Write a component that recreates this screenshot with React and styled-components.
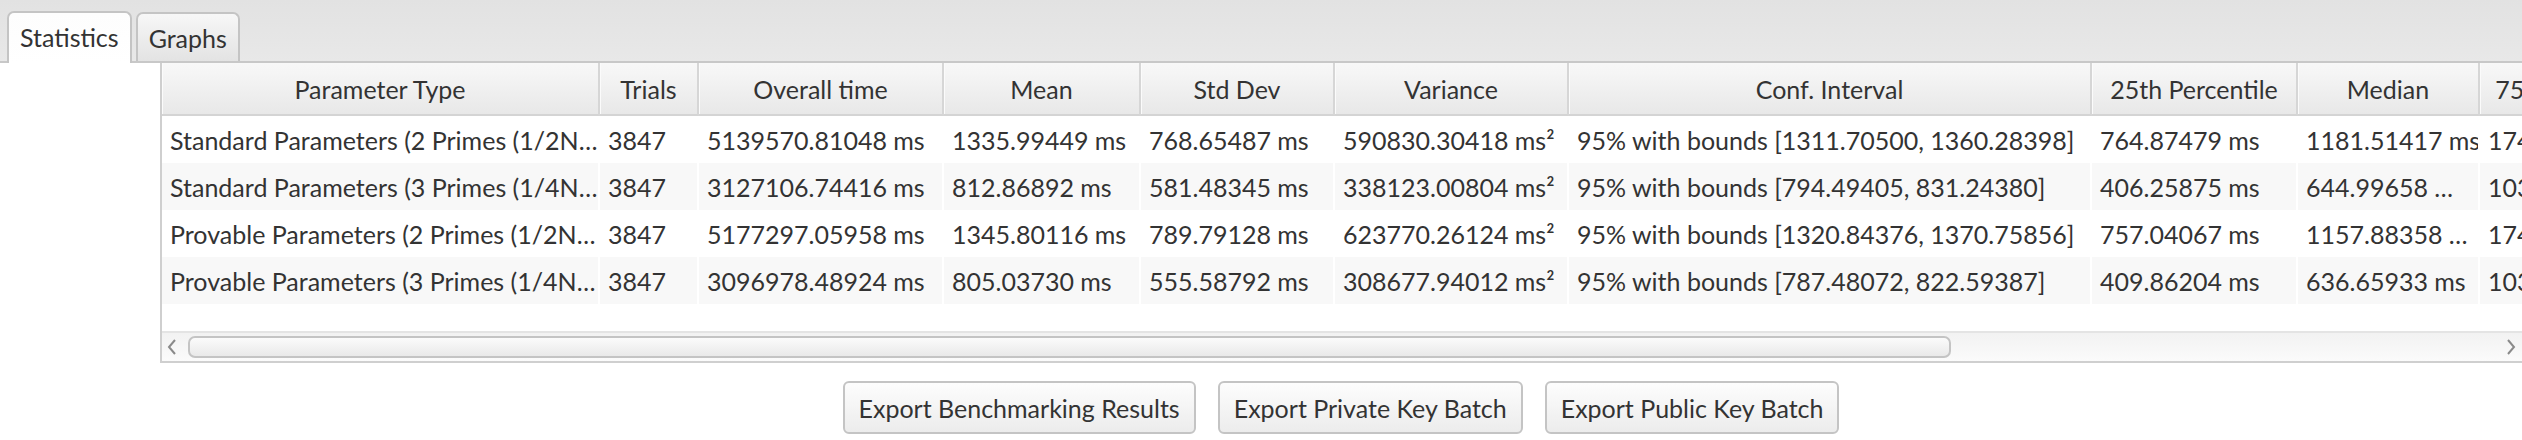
import React from "react";
import styled, { createGlobalStyle } from "styled-components";

const GlobalStyle = createGlobalStyle`
  html, body {
    margin: 0;
    padding: 0;
    background: #ffffff;
  }
  body {
    font-family: Lato, "Liberation Sans", sans-serif;
    color: #333333;
    overflow: hidden;
  }
`;

const Page = styled.div`
  width: 2522px;
  height: 440px;
  display: flex;
  flex-direction: column;
  background: #ffffff;
  overflow: hidden;
`;

const TabStrip = styled.div`
  height: 61px;
  flex: none;
  display: flex;
  align-items: flex-end;
  gap: 4px;
  padding-left: 7px;
  background: linear-gradient(#e2e2e2, #e8e8e8);
  border-bottom: 2px solid #c8c8c8;
`;

const Tab = styled.div`
  box-sizing: border-box;
  height: ${(p) => (p.$active ? "52px" : "49px")};
  margin-bottom: ${(p) => (p.$active ? "-2px" : "0")};
  padding: 0 11px ${(p) => (p.$active ? "3px" : "0")};
  display: flex;
  align-items: center;
  font-size: 25px;
  color: #333333;
  border: 2px solid #c4c4c4;
  border-bottom: none;
  border-radius: 7px 7px 0 0;
  background: ${(p) =>
    p.$active ? "linear-gradient(#fdfdfd, #ffffff)" : "linear-gradient(#f7f7f7, #e3e3e3)"};
`;

const Content = styled.div`
  flex: 1;
  display: flex;
  min-height: 0;
`;

const Gutter = styled.div`
  width: 160px;
  flex: none;
`;

const Main = styled.div`
  flex: 1;
  min-width: 0;
  display: flex;
  flex-direction: column;
`;

const TableFrame = styled.div`
  box-sizing: border-box;
  height: 300px;
  display: flex;
  flex-direction: column;
  overflow: hidden;
  border-left: 2px solid #cfcfcf;
  border-bottom: 2px solid #cfcfcf;
`;

const COLUMNS = "438px 99px 245px 197px 194px 234px 523px 206px 182px 200px";

const HeaderRow = styled.div`
  display: grid;
  grid-template-columns: ${COLUMNS};
  width: max-content;
  flex: none;
`;

const HeaderCell = styled.div`
  box-sizing: border-box;
  height: 53px;
  display: flex;
  align-items: center;
  justify-content: center;
  font-size: 25px;
  white-space: nowrap;
  overflow: hidden;
  background: linear-gradient(#f8f8f8, #e8e8e8);
  border-right: 2px solid #d6d6d6;
  border-bottom: 2px solid #d4d4d4;
  box-shadow: inset 1px 0 0 #fbfbfb;
`;

const DataRow = styled.div`
  display: grid;
  grid-template-columns: ${COLUMNS};
  width: max-content;
  height: 47px;
  flex: none;
  background: ${(p) => (p.$odd ? "#f8f8f8" : "#ffffff")};
`;

const Cell = styled.div`
  box-sizing: border-box;
  display: flex;
  align-items: center;
  padding-left: 8px;
  font-size: 25px;
  white-space: nowrap;
  overflow: hidden;
  border-right: 2px solid #ffffff;
`;

const Filler = styled.div`
  flex: 1;
`;

const ScrollBar = styled.div`
  box-sizing: border-box;
  height: 30px;
  flex: none;
  display: flex;
  align-items: center;
  padding: 0 5px 0 4px;
  border-top: 2px solid #e4e4e4;
  background: linear-gradient(#f2f2f2, #fbfbfb);
`;

const Thumb = styled.div`
  box-sizing: border-box;
  width: 1763px;
  height: 22px;
  margin-left: 10px;
  border: 2px solid #c4c4c4;
  border-radius: 7px;
  background: linear-gradient(#fbfbfb, #e9e9e9);
`;

const ArrowSlot = styled.div`
  width: 12px;
  height: 18px;
  display: flex;
  align-items: center;
  justify-content: center;
  margin-left: ${(p) => (p.$push ? "auto" : "0")};
`;

const ButtonBar = styled.div`
  display: flex;
  justify-content: center;
  gap: 22px;
  padding-top: 18px;
`;

const Button = styled.button`
  box-sizing: border-box;
  height: 53px;
  padding: 0 14px;
  font-family: Lato, "Liberation Sans", sans-serif;
  font-size: 25px;
  color: #333333;
  border: 2px solid #c4c4c4;
  border-radius: 6px;
  background: linear-gradient(#fdfdfd, #ececec);
`;

const headers = [
  "Parameter Type",
  "Trials",
  "Overall time",
  "Mean",
  "Std Dev",
  "Variance",
  "Conf. Interval",
  "25th Percentile",
  "Median",
  "75th Percentile",
];

const rows = [
  [
    "Standard Parameters (2 Primes (1/2N…",
    "3847",
    "5139570.81048 ms",
    "1335.99449 ms",
    "768.65487 ms",
    "590830.30418 ms²",
    "95% with bounds [1311.70500, 1360.28398]",
    "764.87479 ms",
    "1181.51417 ms",
    "1742.10325 ms",
  ],
  [
    "Standard Parameters (3 Primes (1/4N…",
    "3847",
    "3127106.74416 ms",
    "812.86892 ms",
    "581.48345 ms",
    "338123.00804 ms²",
    "95% with bounds [794.49405, 831.24380]",
    "406.25875 ms",
    "644.99658 …",
    "1033.41287 ms",
  ],
  [
    "Provable Parameters (2 Primes (1/2N…",
    "3847",
    "5177297.05958 ms",
    "1345.80116 ms",
    "789.79128 ms",
    "623770.26124 ms²",
    "95% with bounds [1320.84376, 1370.75856]",
    "757.04067 ms",
    "1157.88358 …",
    "1741.56032 ms",
  ],
  [
    "Provable Parameters (3 Primes (1/4N…",
    "3847",
    "3096978.48924 ms",
    "805.03730 ms",
    "555.58792 ms",
    "308677.94012 ms²",
    "95% with bounds [787.48072, 822.59387]",
    "409.86204 ms",
    "636.65933 ms",
    "1031.72046 ms",
  ],
];

function Chevron({ dir }) {
  const points = dir === "left" ? "9,2 3,9 9,16" : "3,2 9,9 3,16";
  return (
    <svg width="12" height="18" viewBox="0 0 12 18">
      <polyline points={points} fill="none" stroke="#8a8a8a" strokeWidth="2" />
    </svg>
  );
}

export default function App() {
  return (
    <Page>
      <GlobalStyle />
      <TabStrip>
        <Tab $active>Statistics</Tab>
        <Tab>Graphs</Tab>
      </TabStrip>
      <Content>
        <Gutter />
        <Main>
          <TableFrame>
            <HeaderRow>
              {headers.map((h) => (
                <HeaderCell key={h}>{h}</HeaderCell>
              ))}
            </HeaderRow>
            {rows.map((r, i) => (
              <DataRow key={i} $odd={i % 2 === 1}>
                {r.map((v, j) => (
                  <Cell key={j}>{v}</Cell>
                ))}
              </DataRow>
            ))}
            <Filler />
            <ScrollBar>
              <ArrowSlot>
                <Chevron dir="left" />
              </ArrowSlot>
              <Thumb />
              <ArrowSlot $push>
                <Chevron dir="right" />
              </ArrowSlot>
            </ScrollBar>
          </TableFrame>
          <ButtonBar>
            <Button>Export Benchmarking Results</Button>
            <Button>Export Private Key Batch</Button>
            <Button>Export Public Key Batch</Button>
          </ButtonBar>
        </Main>
      </Content>
    </Page>
  );
}
